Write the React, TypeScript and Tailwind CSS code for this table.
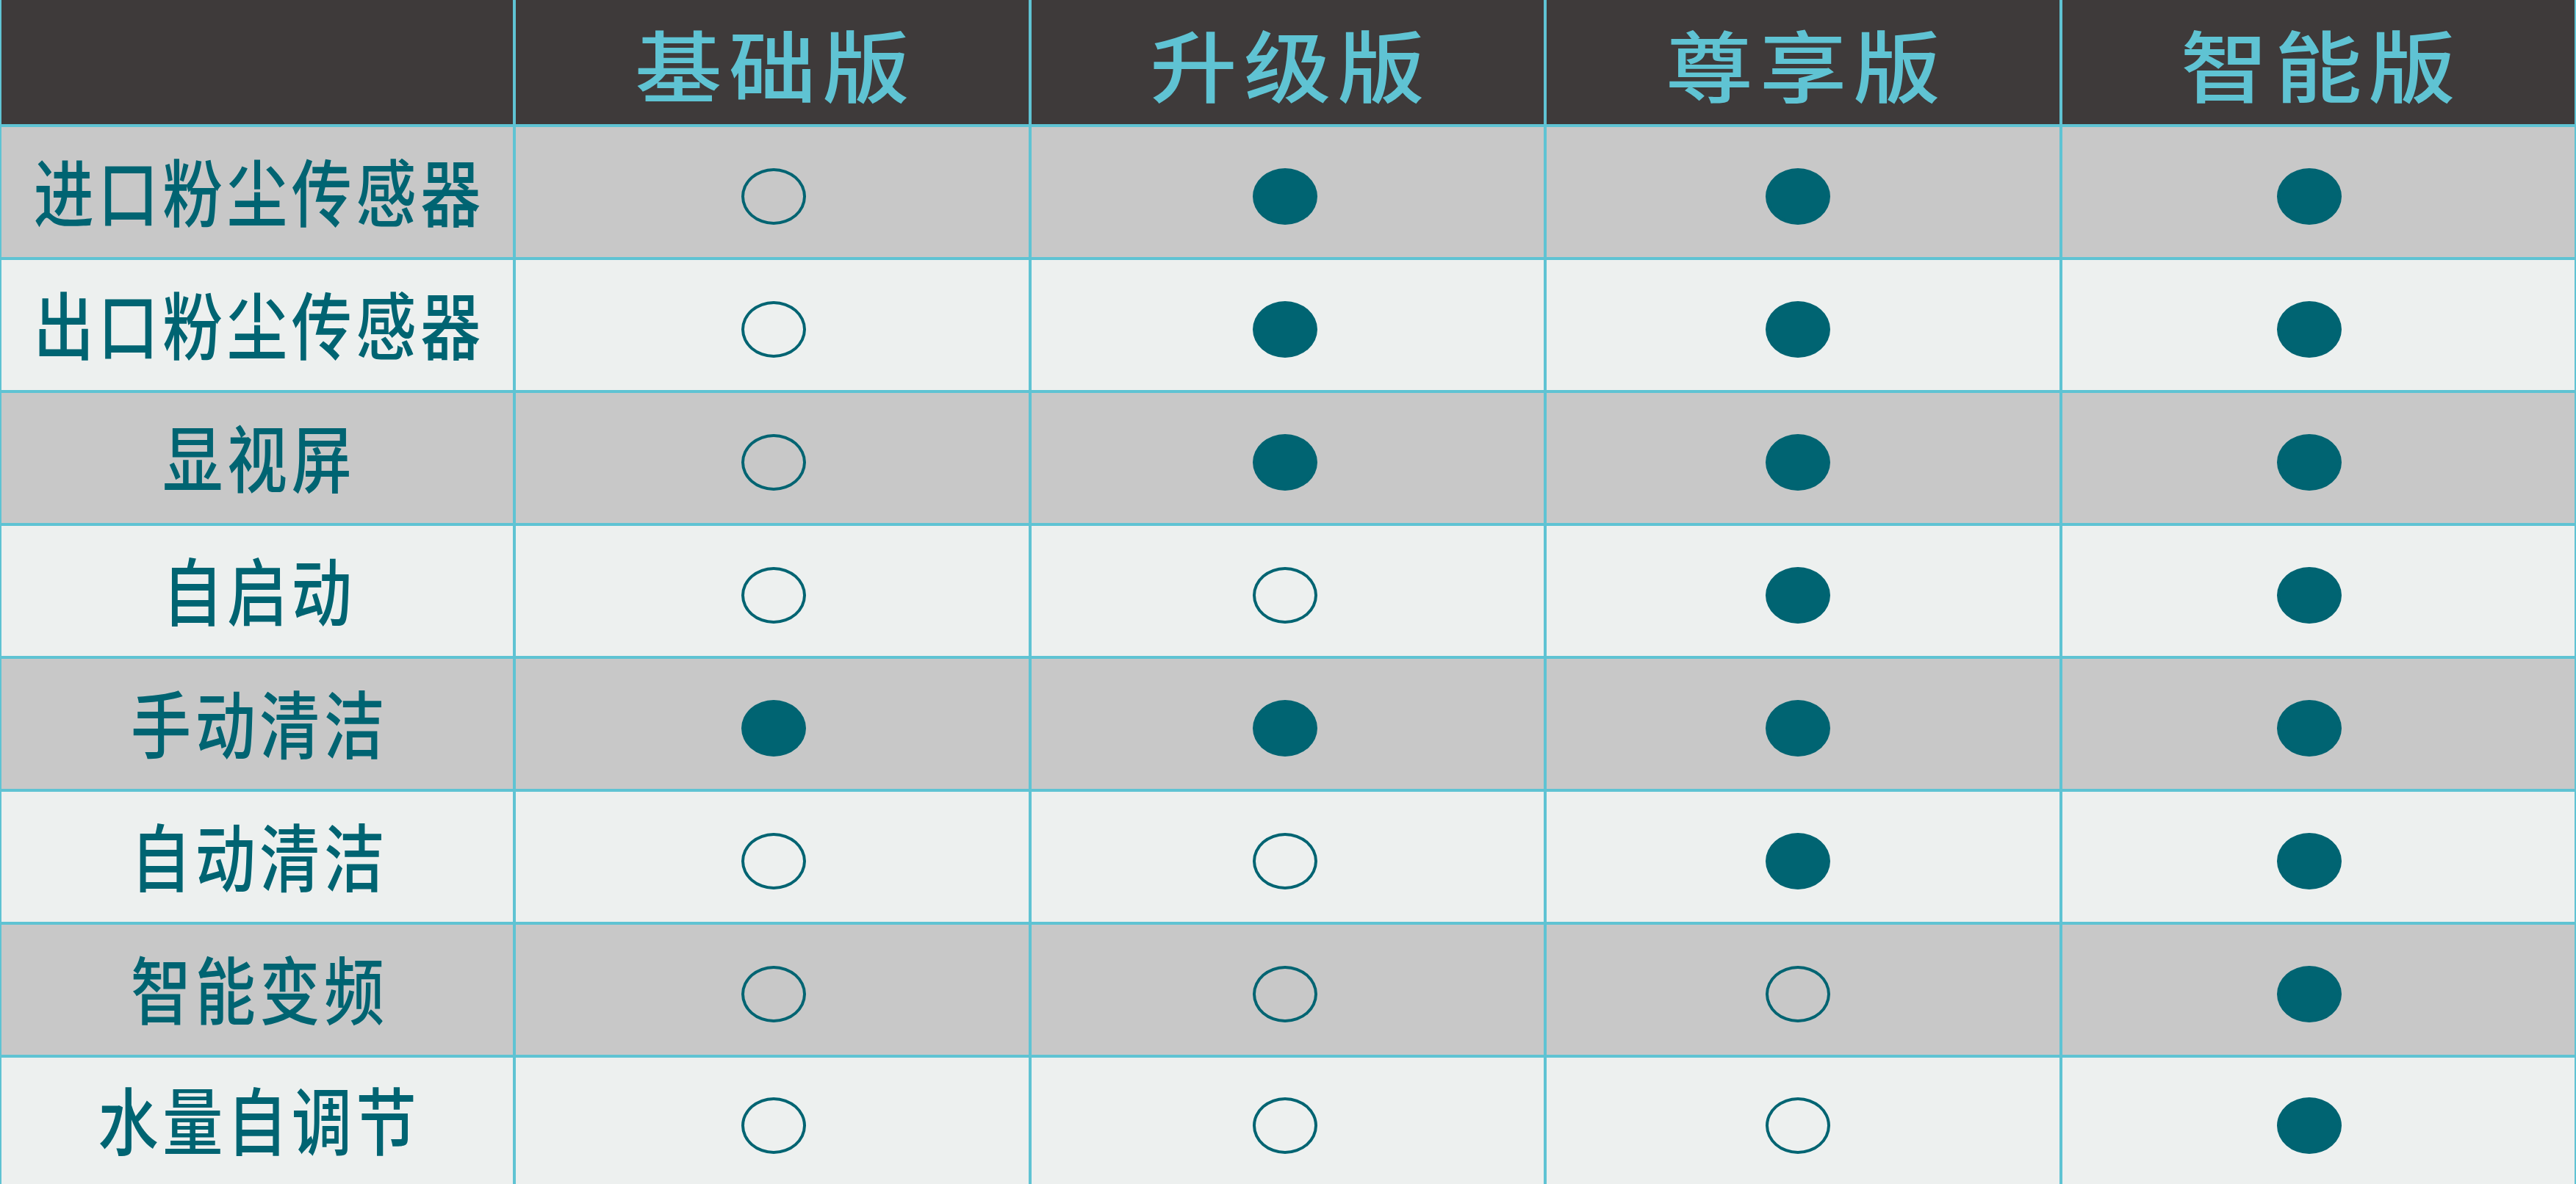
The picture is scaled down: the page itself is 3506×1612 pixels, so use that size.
import React from "react";

const headers = ["基础版", "升级版", "尊享版", "智能版"];

const rows: { label: string; v: number[] }[] = [
  { label: "进口粉尘传感器", v: [0, 1, 1, 1] },
  { label: "出口粉尘传感器", v: [0, 1, 1, 1] },
  { label: "显视屏", v: [0, 1, 1, 1] },
  { label: "自启动", v: [0, 0, 1, 1] },
  { label: "手动清洁", v: [1, 1, 1, 1] },
  { label: "自动清洁", v: [0, 0, 1, 1] },
  { label: "智能变频", v: [0, 0, 0, 1] },
  { label: "水量自调节", v: [0, 0, 0, 1] },
];

const colShift = [
  "translate-x-[2px]",
  "-translate-x-[3px]",
  "-translate-x-[7px]",
  "-translate-x-[12px]",
];

function Dot({ filled, shift }: { filled: boolean; shift: string }) {
  return (
    <div
      className={
        "w-[88px] h-[77px] rounded-[50%] border-[4px] border-[#006472] translate-y-[6px] " +
        shift +
        (filled ? " bg-[#006472]" : "")
      }
    />
  );
}

export default function App() {
  return (
    <div className="w-[3506px] h-[1612px] overflow-hidden bg-[#edf0ef] font-['Noto_Sans_CJK_SC',sans-serif]">
      <div className="flex flex-col h-full border-l-2 border-r-2 border-[#5fc3d3]">
        <div className="grid grid-cols-[696px_1fr_1fr_1fr_1fr] h-[169px] shrink-0 bg-[#3e3a3a]">
          <div />
          {headers.map((h) => (
            <div
              key={h}
              className="border-l-4 border-[#5fc3d3] flex items-center justify-center"
            >
              <span className="inline-block text-[106px] leading-none font-medium tracking-[8px] pl-[8px] text-[#5fc3d3] scale-x-[1.12]">
                {h}
              </span>
            </div>
          ))}
        </div>
        {rows.map((r, i) => (
          <div
            key={r.label}
            className={
              "grid grid-cols-[696px_1fr_1fr_1fr_1fr] border-t-4 border-[#5fc3d3] " +
              (i === rows.length - 1 ? "flex-1 " : "h-[181px] shrink-0 ") +
              (i % 2 === 0 ? "bg-[#c8c8c8]" : "bg-[#edf0ef]")
            }
          >
            <div className="flex items-center justify-center">
              <span className="inline-block whitespace-nowrap text-[100px] leading-none font-medium tracking-[7px] pl-[7px] text-[#006472] scale-x-[0.82] -translate-y-[4px]">
                {r.label}
              </span>
            </div>
            {r.v.map((v, j) => (
              <div
                key={j}
                className="border-l-4 border-[#5fc3d3] flex items-center justify-center"
              >
                <Dot filled={v === 1} shift={colShift[j]} />
              </div>
            ))}
          </div>
        ))}
      </div>
    </div>
  );
}
